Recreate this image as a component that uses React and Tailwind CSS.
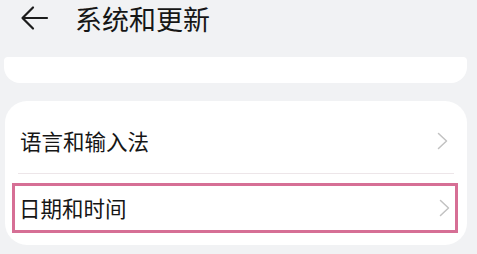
import React from 'react';

const Chevron = () => (
  <svg width="11" height="18" viewBox="0 0 11 18" fill="none">
    <path d="M1.5 1.5 L9.5 9 L1.5 16.5" stroke="#c2c2c2" strokeWidth="1.5" strokeLinecap="round" strokeLinejoin="round" />
  </svg>
);

export default function App() {
  return (
    <div
      className="w-[477px] h-[254px] bg-[#f1f2f4] overflow-hidden text-[#161616]"
      style={{ fontFamily: '"Noto Sans CJK SC", "Noto Sans", sans-serif' }}
    >
      {/* header */}
      <div className="flex items-center h-[36px] pl-[20px]">
        <svg width="29" height="28" viewBox="0 0 29 28" fill="none">
          <path d="M27 14 H3 M13 3.5 L2.5 14 L13 24.5" stroke="#1c1c1c" strokeWidth="2.2" strokeLinecap="round" strokeLinejoin="round" />
        </svg>
        <div className="ml-[26px] text-[27px] leading-none">系统和更新</div>
      </div>

      {/* scrolled card peeking under the header */}
      <div className="mt-[21px] ml-[4px] w-[463px] h-[26px] bg-white rounded-t-[4px] rounded-b-[16px]" />

      {/* settings card */}
      <div className="mt-[18px] ml-[5px] w-[462px] h-[144px] bg-white rounded-[22px] overflow-hidden">
        <div className="h-[72px] flex items-center justify-between pl-[15px] pr-[19px] pt-[8px]">
          <span className="text-[21.5px] leading-none">语言和输入法</span>
          <Chevron />
        </div>
        <div className="h-px mx-[13px] bg-[#ede6e9]" />
        <div className="mt-[9px] ml-[7px] w-[446px] h-[50px] border-[3.5px] border-[#d66f95] flex items-center justify-between pl-[4px] pr-[5px]">
          <span className="text-[21.5px] leading-none">日期和时间</span>
          <Chevron />
        </div>
      </div>
    </div>
  );
}
